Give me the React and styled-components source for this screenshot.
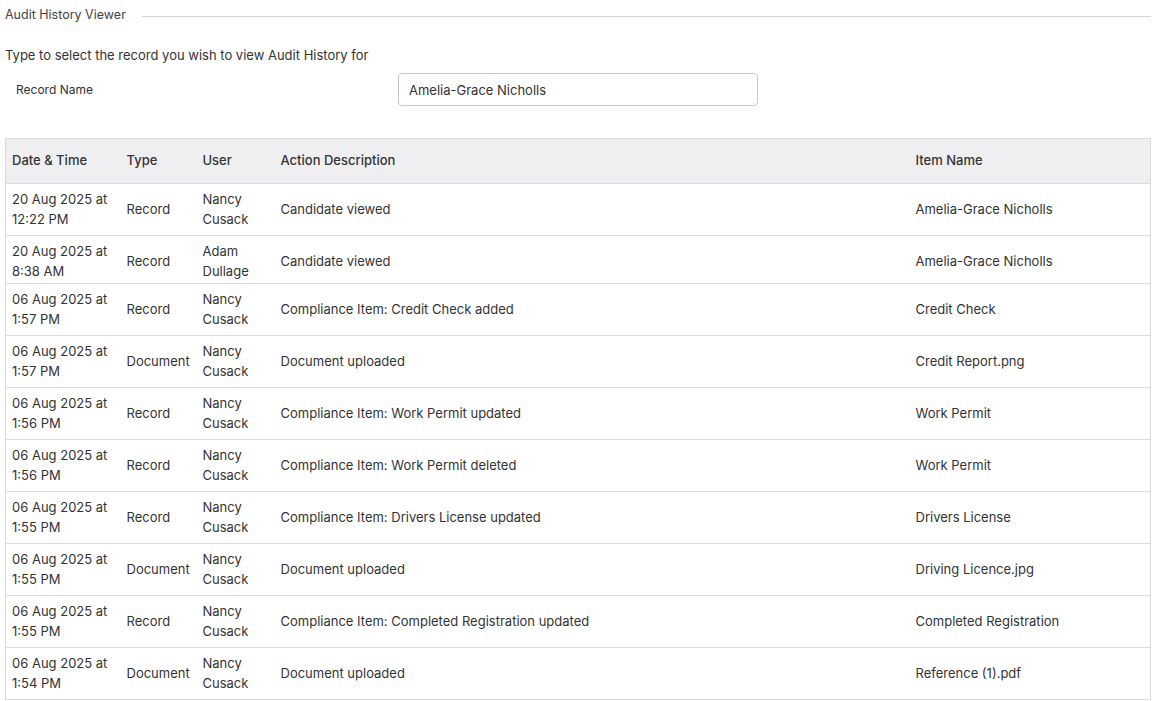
import styled, { createGlobalStyle } from "styled-components";

const GlobalStyle = createGlobalStyle`
  body {
    margin: 0;
    background: #fff;
    font-family: Inter, "Noto Sans", sans-serif;
    color: #333;
  }
`;

const rows = [
  ["20 Aug 2025 at", "12:22 PM", "Record", "Nancy", "Cusack", "Candidate viewed", "Amelia-Grace Nicholls"],
  ["20 Aug 2025 at", "8:38 AM", "Record", "Adam", "Dullage", "Candidate viewed", "Amelia-Grace Nicholls", true],
  ["06 Aug 2025 at", "1:57 PM", "Record", "Nancy", "Cusack", "Compliance Item: Credit Check added", "Credit Check"],
  ["06 Aug 2025 at", "1:57 PM", "Document", "Nancy", "Cusack", "Document uploaded", "Credit Report.png"],
  ["06 Aug 2025 at", "1:56 PM", "Record", "Nancy", "Cusack", "Compliance Item: Work Permit updated", "Work Permit"],
  ["06 Aug 2025 at", "1:56 PM", "Record", "Nancy", "Cusack", "Compliance Item: Work Permit deleted", "Work Permit"],
  ["06 Aug 2025 at", "1:55 PM", "Record", "Nancy", "Cusack", "Compliance Item: Drivers License updated", "Drivers License"],
  ["06 Aug 2025 at", "1:55 PM", "Document", "Nancy", "Cusack", "Document uploaded", "Driving Licence.jpg"],
  ["06 Aug 2025 at", "1:55 PM", "Record", "Nancy", "Cusack", "Compliance Item: Completed Registration updated", "Completed Registration"],
  ["06 Aug 2025 at", "1:54 PM", "Document", "Nancy", "Cusack", "Document uploaded", "Reference (1).pdf"],
];

export default function App() {
  return (
    <Page>
      <GlobalStyle />
      <Legend>
        <span>Audit History Viewer</span>
        <Rule />
      </Legend>
      <Intro>Type to select the record you wish to view Audit History for</Intro>
      <FieldRow>
        <FieldLabel>Record Name</FieldLabel>
        <Input defaultValue="Amelia-Grace Nicholls" />
      </FieldRow>
      <Table>
        <colgroup>
          <col style={{ width: 115 }} />
          <col style={{ width: 76 }} />
          <col style={{ width: 78 }} />
          <col style={{ width: 635 }} />
          <col />
        </colgroup>
        <thead>
          <tr>
            <Th>Date &amp; Time</Th>
            <Th>Type</Th>
            <Th>User</Th>
            <Th>Action Description</Th>
            <Th>Item Name</Th>
          </tr>
        </thead>
        <tbody>
          {rows.map((r, i) => (
            <tr key={i}>
              <Td $tight={r[7]}>
                {r[0]}
                <br />
                {r[1]}
              </Td>
              <Td $tight={r[7]}>{r[2]}</Td>
              <Td $tight={r[7]}>
                {r[3]}
                <br />
                {r[4]}
              </Td>
              <Td $tight={r[7]}>{r[5]}</Td>
              <Td $tight={r[7]}>{r[6]}</Td>
            </tr>
          ))}
        </tbody>
      </Table>
    </Page>
  );
}

const Page = styled.div`
  padding: 6px 5px 0 5px;
  font-size: 13px;
`;

const Legend = styled.div`
  display: flex;
  align-items: center;
  gap: 16px;
  color: #444;
  font-size: 12.5px;
  line-height: 18px;
`;

const Rule = styled.div`
  flex: 1;
  height: 1px;
  background: #d4d4d4;
  margin-top: 2px;
`;

const Intro = styled.p`
  margin: 22px 0 0 0;
  line-height: 18px;
  color: #333;
`;

const FieldRow = styled.div`
  display: flex;
  align-items: center;
  margin-top: 9px;
`;

const FieldLabel = styled.label`
  width: 393px;
  padding-left: 11px;
  box-sizing: border-box;
  font-size: 12px;
  color: #333;
`;

const Input = styled.input`
  width: 360px;
  height: 33px;
  box-sizing: border-box;
  border: 1px solid #c8c8c8;
  border-radius: 4px;
  padding: 0 10px;
  font-family: Inter, "Noto Sans", sans-serif;
  font-size: 13px;
  color: #333;
  outline: none;
`;

const Table = styled.table`
  margin-top: 32px;
  width: 100%;
  border-collapse: collapse;
  table-layout: fixed;
  border: 1px solid #dcdcdc;
`;

const Th = styled.th`
  background: #efeff1;
  text-align: left;
  font-weight: 500;
  color: #333;
  padding: 11px 6px 13px;
  line-height: 20px;
  border-bottom: 1px solid #dcdcdc;
`;

const Td = styled.td`
  padding: ${(p) => (p.$tight ? "4.5px 6px 2.5px" : "4.5px 6px 6.5px")};
  line-height: 20px;
  color: #333;
  vertical-align: middle;
  border-bottom: 1px solid #dcdcdc;
`;
